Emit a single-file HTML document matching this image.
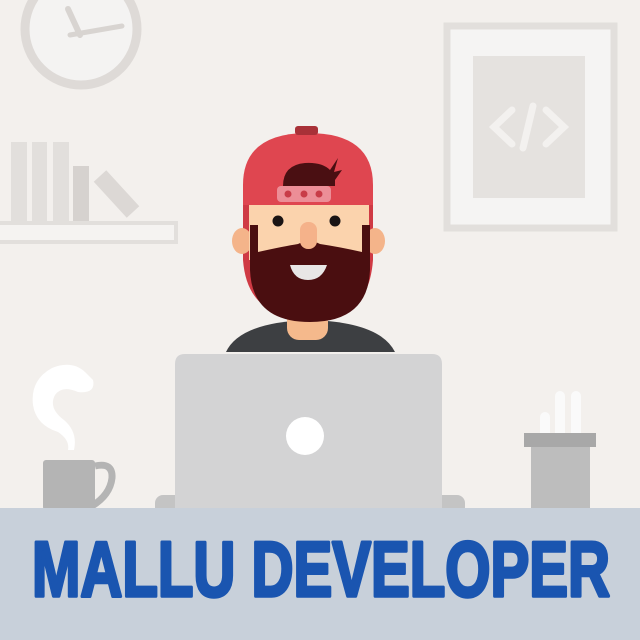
<!DOCTYPE html>
<html><head><meta charset="utf-8"><style>html,body{margin:0;padding:0;background:#f3f0ed}svg{display:block}</style></head>
<body>
<svg width="640" height="640" viewBox="0 0 640 640" xmlns="http://www.w3.org/2000/svg">
<rect width="640" height="640" fill="#f3f0ed"/>
<circle cx="81" cy="29" r="56" fill="#f4f3f2" stroke="#dedad7" stroke-width="9"/>
<line x1="68" y1="9" x2="80" y2="35" stroke="#d8d4d1" stroke-width="6" stroke-linecap="round"/>
<line x1="70" y1="35" x2="122" y2="26" stroke="#d8d4d1" stroke-width="5" stroke-linecap="round"/>
<rect x="11" y="142" width="16" height="80" fill="#e2dfdc"/>
<rect x="32" y="142" width="15" height="80" fill="#e2dfdc"/>
<rect x="53" y="142" width="16" height="80" fill="#e2dfdc"/>
<rect x="73" y="166" width="16" height="56" fill="#d6d2cf"/>
<line x1="100" y1="176" x2="133" y2="212" stroke="#dcd8d5" stroke-width="17"/>
<rect x="-4" y="223" width="180" height="19" fill="#f5f3f1" stroke="#e2dfdc" stroke-width="4"/>
<rect x="447" y="26" width="167" height="202" fill="#f5f4f3" stroke="#e2dfdc" stroke-width="7"/>
<rect x="473" y="56" width="112" height="142" fill="#e5e2df"/>
<g stroke="#f3f1ef" stroke-width="7" stroke-linecap="round" fill="none">
<polyline points="512,110 494,127 512,144"/>
<line x1="533" y1="106" x2="523" y2="148"/>
<polyline points="546,110 564,127 546,144"/>
</g>
<path d="M226 352 Q240 322 310 320 Q380 322 395 352 Z" fill="#3d3f42"/>
<rect x="287" y="300" width="41" height="40" rx="12" fill="#f5b98c"/>
<path d="M243 205 L243 260 Q246 300 275 312 L345 312 Q370 300 373 260 L373 205 Z" fill="#cf3a44"/>
<path d="M243 205 L243 185 Q243 133 308 133 Q373 133 373 185 L373 205 Z" fill="#df4650"/>
<rect x="295" y="126" width="23" height="9" rx="3" fill="#a83138"/>
<path d="M283 186 Q283 165 305 163 Q322 162 330 170 L338 158 L334 172 L342 170 L335 180 L335 186 Z" fill="#4a0f12"/>
<rect x="277" y="186" width="54" height="16" rx="4" fill="#ec8e97"/>
<circle cx="288" cy="194" r="3.5" fill="#c83c48"/><circle cx="304" cy="194" r="3.5" fill="#c83c48"/><circle cx="319" cy="194" r="3.5" fill="#c83c48"/>
<ellipse cx="242" cy="241" rx="10" ry="13" fill="#f4b48a"/>
<ellipse cx="375" cy="241" rx="10" ry="13" fill="#f4b48a"/>
<rect x="249" y="205" width="120" height="55" fill="#fbd3ad"/>
<path d="M250 225 L258 225 L258 252 Q285 246 298 244 Q309 238 320 244 Q340 247 362 252 L362 225 L370 225 L370 270 Q368 322 310 322 Q252 322 250 270 Z" fill="#4a0e10"/>
<path d="M290 265 L327 265 Q322 280 308 280 Q294 280 290 265 Z" fill="#e8e6e6"/>
<rect x="300" y="222" width="17" height="27" rx="8" fill="#f5b28a"/>
<circle cx="278" cy="221" r="5.5" fill="#1a1414"/>
<circle cx="335" cy="221" r="5.5" fill="#1a1414"/>
<rect x="155" y="495" width="310" height="20" rx="8" fill="#c4c4c4"/>
<path d="M175 508 L175 364 Q175 354 185 354 L432 354 Q442 354 442 364 L442 508 Z" fill="#d3d3d4"/>
<ellipse cx="305" cy="436" rx="19" ry="19" fill="#ffffff"/>
<path d="M95 466 Q113 462 112 478 Q110 495 92 506" fill="none" stroke="#b4b4b4" stroke-width="7"/>
<rect x="43" y="460" width="52" height="50" rx="3" fill="#b4b4b4"/>
<path d="M85 372 Q72 360 52 368 Q30 380 33 405 Q36 425 58 432 Q70 440 68 450 L74 450 Q78 432 64 420 Q48 408 55 395 Q62 385 78 392 Q96 394 93 380 Z" fill="#ffffff"/>
<rect x="540" y="412" width="10" height="30" rx="5" fill="#fafafa"/>
<rect x="555" y="391" width="10" height="50" rx="5" fill="#fafafa"/>
<rect x="571" y="391" width="10" height="50" rx="5" fill="#fafafa"/>
<rect x="531" y="445" width="59" height="65" fill="#bdbdbd"/>
<rect x="524" y="433" width="72" height="14" fill="#a8a8a8"/>
<rect x="0" y="508" width="640" height="132" fill="#c8d0da"/>
<text x="32" y="596" textLength="578" lengthAdjust="spacingAndGlyphs" font-family="Liberation Sans, sans-serif" font-weight="bold" font-size="78" fill="#1a55b0" stroke="#1a55b0" stroke-width="3.5" stroke-linejoin="round">MALLU DEVELOPER</text>
</svg>
</body></html>
